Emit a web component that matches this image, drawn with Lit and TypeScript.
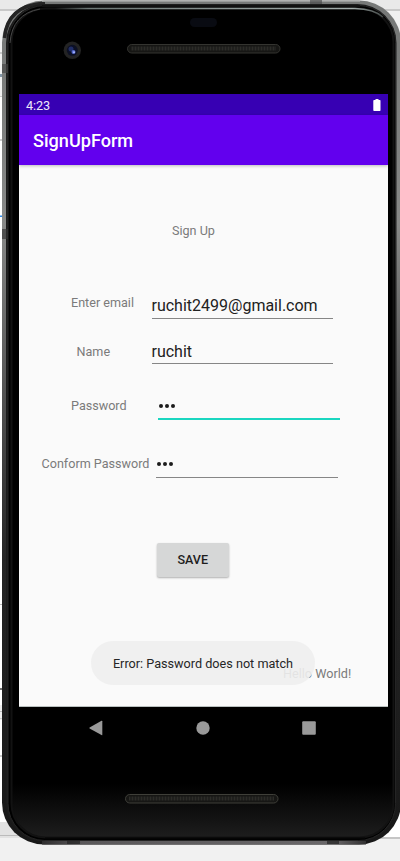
import { LitElement, html, css, svg } from "lit";
import { customElement } from "lit/decorators.js";

@customElement("phone-frame")
class PhoneFrame extends LitElement {
  static styles = css`
    :host { display: block; width: 400px; height: 861px; }
    svg { display: block; }
  `;

  private grille(x: number, y: number, edge: string) {
    return svg`
      <rect x=${x + 0.5} y=${y + 0.5} width="152.500" height="8.500" rx="4.250" fill="#161614" stroke=${edge}></rect>
      <rect x=${x + 4} y=${y + 2.5} width="145" height="4" fill="url(#mesh)"></rect>`;
  }

  render() {
    return html`<svg width="400" height="861" viewBox="0 0 400 861">
      <defs>
        <linearGradient id="rim" x1="0" y1="0" x2="0" y2="861" gradientUnits="userSpaceOnUse">
          <stop offset="0" stop-color="#777978"></stop>
          <stop offset="0.06" stop-color="#777978"></stop>
          <stop offset="0.26" stop-color="#888988"></stop>
          <stop offset="0.45" stop-color="#555"></stop>
          <stop offset="0.65" stop-color="#252525"></stop>
          <stop offset="1" stop-color="#171717"></stop>
        </linearGradient>
        <linearGradient id="glass" x1="0" y1="0" x2="0" y2="861" gradientUnits="userSpaceOnUse">
          <stop offset="0" stop-color="#000"></stop>
          <stop offset="0.91" stop-color="#000"></stop>
          <stop offset="0.945" stop-color="#101010"></stop>
          <stop offset="0.972" stop-color="#1d1d1d"></stop>
        </linearGradient>
        <linearGradient id="shine" x1="55" y1="0" x2="385" y2="0" gradientUnits="userSpaceOnUse">
          <stop offset="0" stop-color="#6f7977" stop-opacity="0"></stop>
          <stop offset="0.1" stop-color="#6f7977"></stop>
          <stop offset="0.9" stop-color="#a4aeac"></stop>
          <stop offset="1" stop-color="#6f7977" stop-opacity="0.5"></stop>
        </linearGradient>
        <linearGradient id="chin" x1="30" y1="0" x2="375" y2="0" gradientUnits="userSpaceOnUse">
          <stop offset="0" stop-color="#222"></stop>
          <stop offset="0.15" stop-color="#5a585a"></stop>
          <stop offset="0.88" stop-color="#6a686a"></stop>
          <stop offset="1" stop-color="#222"></stop>
        </linearGradient>
        <pattern id="mesh" width="3" height="4" patternUnits="userSpaceOnUse">
          <rect width="3" height="4" fill="#20201e"></rect>
          <rect width="1" height="4" fill="#2c2c28"></rect>
        </pattern>
      </defs>

      <rect width="400" height="861" fill="#fff"></rect>
      <rect width="400" height="10" fill="#e9e9e9"></rect>
      <rect y="9" width="400" height="2" fill="#c9c9c9"></rect>
      <rect y="11" width="400" height="42" fill="#f0f0f0"></rect>
      <rect y="52" width="4" height="2" fill="#c9c9c9"></rect>
      <rect y="54" width="4" height="42" fill="#f0f0f0"></rect>
      <rect y="74" width="3" height="3" fill="#8295a5"></rect>
      <rect y="96" width="4" height="1" fill="#ccc"></rect>
      <rect y="139" width="4" height="2" fill="#ccc"></rect>
      <rect y="215.500" width="4" height="1.500" fill="#2d8cf0"></rect>
      <rect y="604" width="4" height="1" fill="#bbb"></rect>
      <rect y="688" width="4" height="2" fill="#777"></rect>
      <rect y="705" width="4" height="15" fill="#eee"></rect>
      <rect y="711" width="4" height="1" fill="#bbb"></rect>
      <rect y="718" width="4" height="1" fill="#ccc"></rect>
      <rect y="755" width="4" height="2" fill="#ccc"></rect>
      <rect y="822" width="60" height="16" fill="#e2e2e2"></rect>
      <rect y="838" width="400" height="23" fill="#f1f1f1"></rect>
      <rect y="835" width="60" height="1" fill="#bbb"></rect>
      <rect x="380" y="837" width="20" height="2" fill="#c5c5c5"></rect>

      <rect x="2" y="0.500" width="399" height="844" rx="42" fill="url(#rim)"></rect>
      <path d="M4.500 38Q7 5.500 45 3" fill="none" stroke="#242424" stroke-width="3.500"></path>
      <rect x="6" y="4" width="390.500" height="838" rx="39" fill="#1c1c1c"></rect>
      <rect x="8" y="5.500" width="387.500" height="835" rx="37" fill="#000" stroke="#242424" stroke-width="1"></rect>
      <rect x="11.500" y="8.500" width="382" height="829" rx="34" fill="url(#glass)" stroke="#121212" stroke-width="2"></rect>
      <rect x="17" y="50" width="374" height="730" fill="#000"></rect>
      <path d="M10 43Q12 14 40 9" fill="none" stroke="#484848" stroke-width="1"></path>
      <path d="M45 838.500H365" stroke="#050505" stroke-width="2"></path>
      <rect x="42" y="841" width="324" height="3.500" fill="url(#chin)"></rect>
      <rect x="42" y="1" width="318" height="1" fill="#9a9c9b"></rect>
      <rect x="42" y="5" width="318" height="2" fill="#111"></rect>
      <path d="M55 8.500H355Q374 9 383 17" fill="none" stroke="url(#shine)" stroke-width="1.500"></path>
      <rect x="310" y="0" width="12" height="4" fill="#444" opacity=".6"></rect>
      <rect x="2" y="64" width="6" height="9" fill="#444" opacity=".65"></rect>
      <rect x="2" y="229" width="6" height="10" fill="#333" opacity=".65"></rect>
      <rect x="67" y="840" width="13" height="4" fill="#222" opacity=".7"></rect>
      <rect x="327" y="840" width="12" height="4" fill="#222" opacity=".7"></rect>

      <rect x="190" y="18" width="27" height="9" rx="4.500" fill="#090b12"></rect>
      <circle cx="72.300" cy="50.300" r="8.700" fill="#232323"></circle>
      <circle cx="72.300" cy="50.300" r="5.500" fill="#0c1024"></circle>
      <circle cx="71" cy="49" r="2.500" fill="#202d66"></circle>
      <circle cx="73.500" cy="52" r="2" fill="#5468cc"></circle>
      <circle cx="74" cy="52.300" r="1" fill="#a9b6ff"></circle>
      ${this.grille(127, 44, "#343430")}
      ${this.grille(125, 794, "#3f3f39")}
    </svg>`;
  }
}

@customElement("form-field")
class FormField extends LitElement {
  static properties = { label: {}, value: {}, kind: {} };
  declare label: string;
  declare value: string;
  declare kind: string;

  static styles = css`
    :host { display: flex; align-items: flex-start; height: 26px; }
    .label { flex: none; width: var(--label-width); font-size: 12.600px; line-height: 16px; color: #7b7b7b; white-space: nowrap; padding-top: var(--label-top, 0); }
    .input { box-sizing: border-box; width: 181.500px; height: 26px; border-bottom: 1px solid #868686; font-size: 16px; line-height: var(--value-line, 26px); color: #212121; }
    .focused { width: 182px; border-bottom: 2px solid #1ad6c0; }
    .dots { display: flex; gap: 2px; padding: 10px 0 0 1px; }
    .dot { width: 4px; height: 4px; border-radius: 50%; background: #1c1c1c; }
  `;

  render() {
    const secret = this.kind !== "text";
    return html`
      <div class="label">${this.label}</div>
      <div class="input ${this.kind === "focused" ? "focused" : ""}">
        ${secret
          ? html`<div class="dots">${[...this.value].map(() => html`<i class="dot"></i>`)}</div>`
          : this.value}
      </div>`;
  }
}

@customElement("app-root")
class AppRoot extends LitElement {
  static styles = css`
    :host { display: grid; width: 400px; height: 861px; overflow: hidden; font-family: Roboto, sans-serif; }
    phone-frame, .device { grid-area: 1 / 1; }
    .device { padding: 94px 12px 0 19px; display: flex; flex-direction: column; z-index: 1; }
    .status { height: 21px; background: #3700b3; color: #eee8fa; display: flex; align-items: center; justify-content: space-between; padding: 0 7px; box-sizing: border-box; font-size: 12.700px; letter-spacing: -.1px; }
    .time { padding-top: 1px; }
    .bar { height: 50px; background: #6200ee; color: #fff; font-size: 18.100px; font-weight: 500; line-height: 52px; padding-left: 14px; position: relative; z-index: 1; box-shadow: 0 1px 3px rgba(0,0,0,.25); }
    .content { box-sizing: border-box; height: 542px; background: #fafafa; border-bottom: 1px solid #b9c0bf; display: flex; flex-direction: column; position: relative; }
    .heading { margin: 58px 0 0 153px; height: 16px; line-height: 16px; font-size: 12.600px; color: #7b7b7b; }
    .email { --label-width: 80.500px; --label-top: 2px; margin: 54px 0 0 52px; }
    .name { --label-width: 75px; --label-top: 6px; --value-line: 28px; margin: 19px 0 0 57.500px; }
    .password { --label-width: 87px; --label-top: 4px; margin: 30px 0 0 52px; }
    .confirm { --label-width: 114.500px; --label-top: 4px; margin: 32px 0 0 22.500px; }
    .save { margin: 65px 0 0 137.500px; width: 72.500px; height: 34px; padding: 0; border: 0; border-radius: 2px; background: #d6d7d7; color: #1d1d1d; font: 500 12.570px/34px Roboto, sans-serif; box-shadow: 0 1px 2px rgba(0,0,0,.3); }
    .hello { margin: 89px 0 0 264px; font-size: 12.650px; line-height: 16px; color: #7b7b7b; }
    .toast { position: absolute; left: 72px; top: 476px; width: 224px; height: 44px; border-radius: 22px; background: rgba(238,238,238,.9); color: #262626; font-size: 12.650px; line-height: 45px; text-align: center; white-space: nowrap; }
    .nav { height: 42px; padding: 0 72px 0 70px; display: flex; align-items: center; justify-content: space-between; }
    svg { display: block; }
  `;

  render() {
    return html`
      <phone-frame></phone-frame>
      <div class="device">
        <div class="status">
          <span class="time">4:23</span>
          <svg width="8" height="12" viewBox="0 0 8 12"><path fill="#fff" d="M2.500 0h3v1H7q.5 0 .5 1v9q0 1-.5 1H1q-.7 0-.7-1V2q0-1 .7-1h1.500z"></path></svg>
        </div>
        <div class="bar">SignUpForm</div>
        <div class="content">
          <div class="heading">Sign Up</div>
          <form-field class="email" label="Enter email" value="ruchit2499@gmail.com" kind="text"></form-field>
          <form-field class="name" label="Name" value="ruchit" kind="text"></form-field>
          <form-field class="password" label="Password" value="123" kind="focused"></form-field>
          <form-field class="confirm" label="Conform Password" value="123" kind="secret"></form-field>
          <button class="save">SAVE</button>
          <div class="hello">Hello World!</div>
          <div class="toast">Error: Password does not match</div>
        </div>
        <div class="nav">
          <svg width="14" height="16" viewBox="0 0 14 16"><path fill="#999" d="M12.500.800Q13.300.500 13.300 1.300v13.400q0 .8-.8.4L.6 8.500Q0 8 .6 7.500z"></path></svg>
          <svg width="14" height="14" viewBox="0 0 14 14"><circle cx="7" cy="7" r="6.700" fill="#999"></circle></svg>
          <svg width="14" height="14" viewBox="0 0 14 14"><rect x=".2" y=".2" width="13.600" height="13.600" rx="1" fill="#999"></rect></svg>
        </div>
      </div>`;
  }
}
